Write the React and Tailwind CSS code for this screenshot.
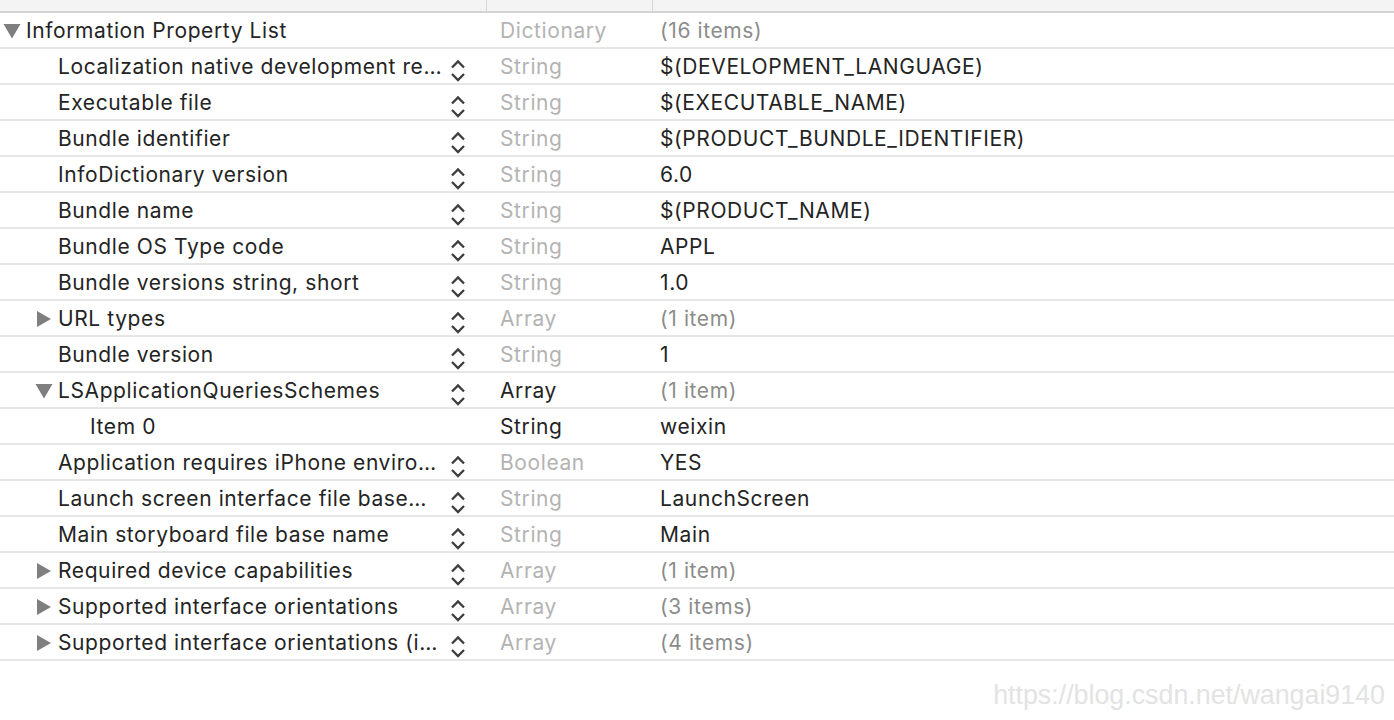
import React from "react";

const rows = [
  { key: "Information Property List", level: 0, tri: "down", type: "Dictionary", value: "(16 items)", valueDim: true, stepper: false },
  { key: "Localization native development re…", level: 1, type: "String", value: "$(DEVELOPMENT_LANGUAGE)" },
  { key: "Executable file", level: 1, type: "String", value: "$(EXECUTABLE_NAME)" },
  { key: "Bundle identifier", level: 1, type: "String", value: "$(PRODUCT_BUNDLE_IDENTIFIER)" },
  { key: "InfoDictionary version", level: 1, type: "String", value: "6.0" },
  { key: "Bundle name", level: 1, type: "String", value: "$(PRODUCT_NAME)" },
  { key: "Bundle OS Type code", level: 1, type: "String", value: "APPL" },
  { key: "Bundle versions string, short", level: 1, type: "String", value: "1.0" },
  { key: "URL types", level: 1, tri: "right", type: "Array", value: "(1 item)", valueDim: true },
  { key: "Bundle version", level: 1, type: "String", value: "1" },
  { key: "LSApplicationQueriesSchemes", level: 1, tri: "down", type: "Array", typeDark: true, value: "(1 item)", valueDim: true },
  { key: "Item 0", level: 2, type: "String", typeDark: true, value: "weixin", stepper: false },
  { key: "Application requires iPhone enviro…", level: 1, type: "Boolean", value: "YES" },
  { key: "Launch screen interface file base…", level: 1, type: "String", value: "LaunchScreen" },
  { key: "Main storyboard file base name", level: 1, type: "String", value: "Main" },
  { key: "Required device capabilities", level: 1, tri: "right", type: "Array", value: "(1 item)", valueDim: true },
  { key: "Supported interface orientations", level: 1, tri: "right", type: "Array", value: "(3 items)", valueDim: true },
  { key: "Supported interface orientations (i…", level: 1, tri: "right", type: "Array", value: "(4 items)", valueDim: true },
];

const indent = ["pl-[26px]", "pl-[58px]", "pl-[90px]"];

// disclosure triangle next to a key
function Triangle({ dir }) {
  if (dir === "down")
    return (
      <svg width="18" height="16" viewBox="0 0 18 16" className="absolute left-[-23px] top-[50%] mt-[-8px]">
        <polygon points="0.5,1 17.5,1 9,15.5" fill="#7f7f7f" />
      </svg>
    );
  return (
    <svg width="16" height="18" viewBox="0 0 16 18" className="absolute left-[-22px] top-[50%] mt-[-9px]">
      <polygon points="1,1 15,9 1,17" fill="#7f7f7f" />
    </svg>
  );
}

// the little up/down popup arrows
function Stepper() {
  return (
    <svg width="16" height="24" viewBox="0 0 16 24" className="shrink-0 mt-[8px]">
      <polyline points="2,8.5 8,2.5 14,8.5" fill="none" stroke="#3d3d3d" strokeWidth="2.3" />
      <polyline points="2,15 8,21 14,15" fill="none" stroke="#3d3d3d" strokeWidth="2.3" />
    </svg>
  );
}

export default function App() {
  return (
    <div
      className="w-[1394px] h-[720px] bg-white overflow-hidden relative text-[#242424]"
      style={{ fontFamily: "Inter, 'Open Sans', sans-serif" }}
    >
      {/* header strip */}
      <div className="h-[13px] bg-[#f4f4f4] border-b-2 border-[#d3d3d3] flex">
        <div className="w-[487px] border-r border-[#d6d6d6]" />
        <div className="w-[166px] border-r border-[#d6d6d6]" />
      </div>

      {rows.map((r, i) => (
        <div key={i} className="h-[36px] flex items-center border-b-2 border-[#e6e6e6] text-[21px] tracking-[0.6px] pt-[1px]">
          <div className={`w-[487px] h-full flex items-center pr-[21px] ${indent[r.level]}`}>
            <div className="relative flex-1 min-w-0 whitespace-nowrap">
              {r.tri && <Triangle dir={r.tri} />}
              <span>{r.key}</span>
            </div>
            {r.stepper !== false ? <Stepper /> : <div className="w-[16px]" />}
          </div>
          <div className={`w-[166px] pl-[13px] ${r.typeDark ? "text-[#242424]" : "text-[#b3b3b3]"}`}>
            {r.type}
          </div>
          <div className={`pl-[7px] ${r.valueDim ? "text-[#8c8c8c]" : "text-[#242424]"}`}>
            {r.value}
          </div>
        </div>
      ))}

      <div
        className="absolute right-[9px] bottom-[5px] text-[26.8px] text-[#e3e3e3]"
        style={{ fontFamily: "'Liberation Sans', Arial, sans-serif" }}
      >
        https://blog.csdn.net/wangai9140
      </div>
    </div>
  );
}
